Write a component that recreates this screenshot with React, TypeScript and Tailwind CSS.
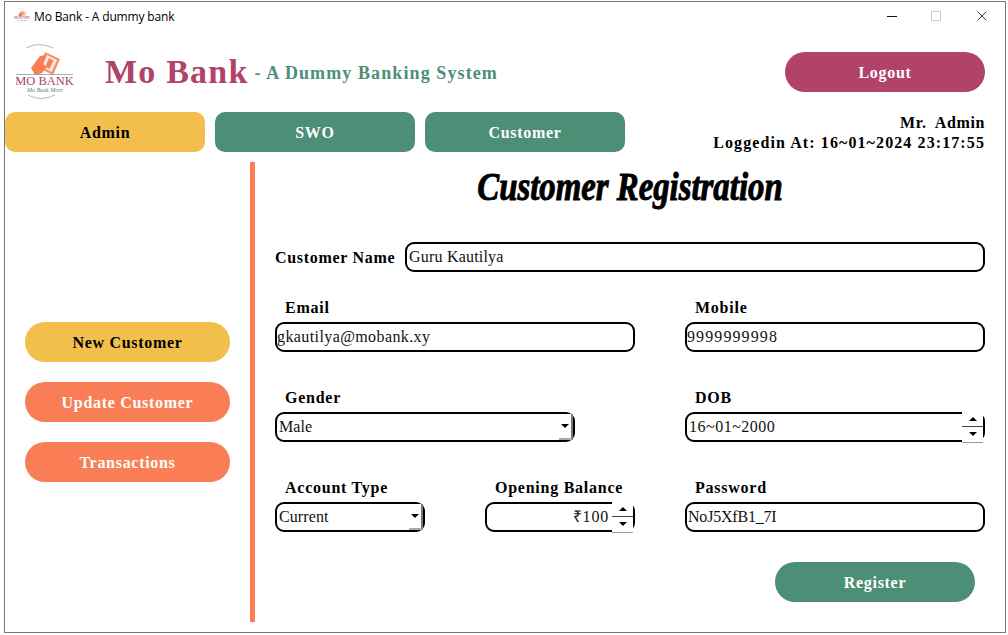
import { X } from "lucide-react";

const serif = "font-['Liberation_Serif',serif]";

function Logo({ small }: { small?: boolean }) {
  return (
    <svg viewBox="0 0 60 60" className={small ? "h-4 w-4" : "h-[60px] w-[60px]"}>
      <path d="M11 6 Q24 -1 38 6" fill="none" stroke="#8a9a9a" strokeWidth="0.7" />
      <path d="M30 10 L45 17 L38 33 L24 26 Z" fill="#f58f6c" />
      <path d="M32 13 L42 18 L36.5 30 L27 25 Z" fill="#fff" opacity="0.8" />
      <path d="M34 16 L38.5 18.5 L34.5 27 L30.5 24.5 Z" fill="#f97e55" />
      <path d="M16 26 L25 14 L31 13 L28 22 L32 25 L27 31 L20 33 Z" fill="#f97e55" />
      <line x1="1" y1="32.5" x2="58" y2="32.5" stroke="#6d9a94" strokeWidth="0.7" />
      <text x="29.5" y="43" textAnchor="middle" fontFamily="Liberation Serif, serif" fontSize="12.5" fill="#b14269">MO BANK</text>
      <text x="30" y="50" textAnchor="middle" fontFamily="Liberation Serif, serif" fontStyle="italic" fontSize="6" fill="#4c8e76">Mo Bank More</text>
      <path d="M13 53 Q26 60 40 53" fill="none" stroke="#8a9a9a" strokeWidth="0.7" />
    </svg>
  );
}

function Tab({ label, active }: { label: string; active?: boolean }) {
  return (
    <div className={`flex h-10 w-[200px] items-center justify-center rounded-[10px] pt-px text-[16px] font-bold tracking-[0.7px] ${active ? "bg-[#f2bf4c] text-black" : "bg-[#4c8e76] text-white"}`}>
      {label}
    </div>
  );
}

function SideButton({ label, active }: { label: string; active?: boolean }) {
  return (
    <div className={`flex h-10 w-[205px] items-center justify-center rounded-[20px] pt-px text-[16px] font-bold tracking-[0.7px] ${active ? "bg-[#f2bf4c] text-black" : "bg-[#f97e55] text-white"}`}>
      {label}
    </div>
  );
}

function Label({ children }: { children: string }) {
  return <div className="flex h-[30px] items-center pl-[10px] pt-px text-[16px] font-bold tracking-[0.75px] text-black">{children}</div>;
}

function Box({ value, className = "" }: { value: string; className?: string }) {
  return (
    <div className={`flex h-[30px] items-center rounded-[9px] border-[2.5px] border-black text-[16px] text-[#111] ${className}`}>
      {value}
    </div>
  );
}

function Arrow({ up }: { up?: boolean }) {
  return (
    <svg viewBox="0 0 8 4" className="h-1 w-2">
      <path d={up ? "M0 4 L4 0 L8 4 Z" : "M0 0 L4 4 L8 0 Z"} fill="#000" />
    </svg>
  );
}

function SelectBox({ value, className = "" }: { value: string; className?: string }) {
  return (
    <div className={`flex h-[30px] items-stretch justify-between rounded-[9px] border-[2.5px] border-black pl-[2px] text-[16px] tracking-[0.1px] text-[#111] ${className}`}>
      <span className="flex items-center">{value}</span>
      <span className="flex w-[14px] items-center justify-center border-r-2 border-b-2 border-r-[#777] border-b-[#aaa] bg-white">
        <Arrow />
      </span>
    </div>
  );
}

function SpinBox({ value, right, className = "" }: { value: string; right?: boolean; className?: string }) {
  return (
    <div className={`flex h-[30px] items-stretch rounded-[9px] border-[2.5px] border-black text-[16px] text-[#111] ${className}`}>
      <span className={`flex flex-1 items-center ${right ? "justify-end pr-[3px]" : ""}`}>{value}</span>
      <span className="-my-[2.5px] flex w-[21px] flex-col bg-white">
        <span className="flex flex-1 items-center justify-center border-b border-b-[#444]">
          <Arrow up />
        </span>
        <span className="flex flex-1 items-center justify-center border-b border-b-[#999]">
          <Arrow />
        </span>
      </span>
    </div>
  );
}

export default function App() {
  return (
    <div className={`h-[635px] w-[1008px] overflow-hidden bg-white pl-[4px] pt-[1px] ${serif}`}>
      <div className="flex h-[632px] w-[1002px] flex-col border border-[#777] bg-white">
        {/* title bar */}
        <div className="flex h-[30px] shrink-0 items-center pb-[2px] pl-[9px]">
          <Logo small />
          <span className="ml-[4px] mt-[2px] font-['Open_Sans',sans-serif] text-[12px] tracking-[-0.15px] text-black">Mo Bank - A dummy bank</span>
          <div className="ml-auto flex items-center">
            <div className="mr-[34px] h-px w-[10px] bg-[#111]" />
            <div className="mr-[33px] h-[10px] w-[10px] border border-[#ccc]" />
            <X className="mr-[15px] h-4 w-4 text-[#111]" strokeWidth={1.25} />
          </div>
        </div>

        {/* header */}
        <div className="flex h-[80px] shrink-0 items-center pl-[10px] pr-[19px]">
          <Logo />
          <span className="ml-[30px] text-[34px] font-bold leading-none tracking-[1.2px] text-[#b14269]">Mo Bank</span>
          <span className="ml-[6px] mt-[2px] text-[18px] font-bold tracking-[1.1px] text-[#4c8e76]">- A Dummy Banking System</span>
          <div className="ml-auto mr-px flex h-10 w-[200px] items-center justify-center rounded-[20px] bg-[#b14269] pt-px text-[16px] font-bold tracking-[0.7px] text-white">
            Logout
          </div>
        </div>

        {/* tabs */}
        <div className="flex h-[40px] shrink-0 items-center gap-[10px] pr-[20px]">
          <Tab label="Admin" active />
          <Tab label="SWO" />
          <Tab label="Customer" />
          <div className="ml-auto pt-[1px] text-right text-[16px] font-bold leading-[20px] text-black">
            <div className="tracking-[0.6px]">Mr.&nbsp; Admin</div>
            <div className="tracking-[1.1px]">Loggedin At: 16~01~2024 23:17:55</div>
          </div>
        </div>

        {/* body */}
        <div className="mt-[10px] flex h-[460px] shrink-0">
          <div className="flex w-[245px] shrink-0 flex-col gap-5 pl-[20px] pt-[160px]">
            <SideButton label="New Customer" active />
            <SideButton label="Update Customer" />
            <SideButton label="Transactions" />
          </div>
          <div className="w-[5px] shrink-0 bg-[#f97e55]" />
          <div className="flex flex-col pl-[20px]">
            <div className="flex h-[50px] w-[710px] scale-x-[0.82] items-center justify-center text-[40px] font-bold italic leading-none text-black [-webkit-text-stroke:1px_black]">
              Customer Registration
            </div>
            <div className="mt-[30px] flex h-[30px] items-center">
              <span className="w-[130px] pt-px text-[16px] font-bold tracking-[0.7px] text-black">Customer Name</span>
              <Box value="Guru Kautilya" className="w-[580px] pl-[2px] tracking-[0.2px]" />
            </div>
            <div className="mt-5 flex gap-[50px]">
              <div className="w-[360px]">
                <Label>Email</Label>
                <Box value="gkautilya@mobank.xy" className="tracking-[0.4px]" />
              </div>
              <div className="w-[300px]">
                <Label>Mobile</Label>
                <Box value="9999999998" className="tracking-[1.1px]" />
              </div>
            </div>
            <div className="mt-[30px] flex gap-[110px]">
              <div className="w-[300px]">
                <Label>Gender</Label>
                <SelectBox value="Male" />
              </div>
              <div className="w-[300px]">
                <Label>DOB</Label>
                <SpinBox value="16~01~2000" className="pl-[2px] tracking-[0.5px]" />
              </div>
            </div>
            <div className="mt-[30px] flex gap-[50px]">
              <div className="flex w-[360px] gap-[60px]">
                <div className="w-[150px]">
                  <Label>Account Type</Label>
                  <SelectBox value="Current" />
                </div>
                <div className="w-[150px]">
                  <Label>Opening Balance</Label>
                  <SpinBox value="₹100" right className="tracking-[0.8px]" />
                </div>
              </div>
              <div className="w-[300px]">
                <Label>Password</Label>
                <Box value="NoJ5XfB1_7I" className="pl-px tracking-[-0.2px]" />
              </div>
            </div>
            <div className="mr-[10px] mt-[30px] flex h-10 w-[200px] items-center justify-center self-end rounded-[20px] bg-[#4c8e76] pt-px text-[16px] font-bold tracking-[0.7px] text-white">
              Register
            </div>
          </div>
        </div>
      </div>
    </div>
  );
}
